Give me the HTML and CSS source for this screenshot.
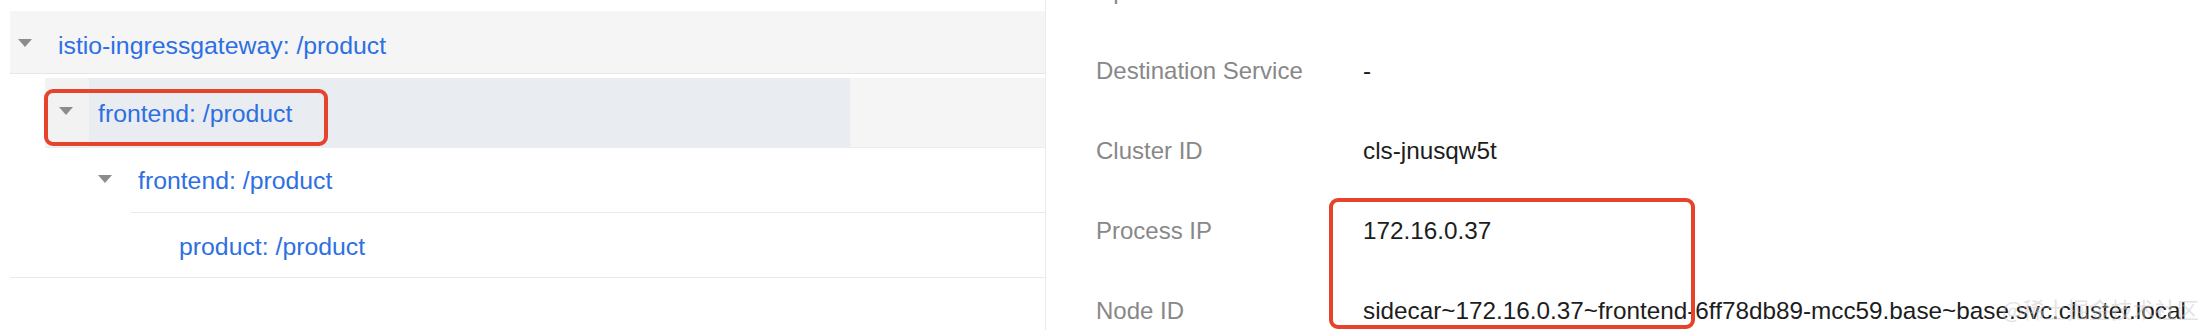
FILE: index.html
```html
<!DOCTYPE html>
<html lang="en">
<head>
    <meta charset="UTF-8">
    <meta name="viewport" content="width=device-width, initial-scale=1.0">
    <title>Trace Detail</title>
    <link rel="stylesheet" href="styles.css">
</head>
<body>
<div class="layout">
    <div class="tree">
        <div class="node node-root">
            <span class="caret"></span>
            <span class="node-label">istio-ingressgateway: /product</span>
        </div>
        <div class="node node-active">
            <span class="caret-box"><span class="caret"></span></span>
            <span class="node-label">frontend: /product</span>
        </div>
        <div class="node node-child">
            <span class="caret-box"><span class="caret"></span></span>
            <span class="node-label">frontend: /product</span>
        </div>
        <div class="node node-leaf">
            <span class="node-label">product: /product</span>
        </div>
    </div>

    <div class="details">
        <div class="prop">
            <span class="prop-name">Upstream Cluster</span>
            <span class="prop-value">-</span>
        </div>
        <div class="prop">
            <span class="prop-name">Destination Service</span>
            <span class="prop-value">-</span>
        </div>
        <div class="prop">
            <span class="prop-name">Cluster ID</span>
            <span class="prop-value">cls-jnusqw5t</span>
        </div>
        <div class="prop">
            <span class="prop-name">Process IP</span>
            <span class="prop-value">172.16.0.37</span>
        </div>
        <div class="prop">
            <span class="prop-name">Node ID</span>
            <span class="prop-value">sidecar~172.16.0.37~frontend-6ff78db89-mcc59.base~base.svc.cluster.local</span>
        </div>
    </div>
</div>

<div class="mark mark-node"></div>
<div class="mark mark-ip"></div>
<div class="watermark">@稀土掘金技术社区</div>
</body>
</html>
```

FILE: styles.css
```css
body {
    margin: 0;
    background: #fff;
    font-family: "Liberation Sans", Arial, sans-serif;
    font-size: 24px;
    overflow: hidden;
    height: 330px;
}

.layout {
    display: flex;
    height: 330px;
}

/* left: call tree */
.tree {
    width: 1035px;
    margin-left: 10px;
    padding-top: 11px;
    border-right: 1px solid #ebebeb;
    flex-shrink: 0;
    font-size: 24.8px;
}

.node {
    display: flex;
    align-items: center;
    box-sizing: border-box;
}

.node-label {
    color: #2e6fe3;
    white-space: nowrap;
}

.caret {
    display: inline-block;
    width: 0;
    height: 0;
    border-left: 7px solid transparent;
    border-right: 7px solid transparent;
    border-top: 8px solid #8c8c8c;
    margin-top: -6px;
}

.node-root {
    height: 63px;
    padding-top: 7px;
    background: #f5f5f5;
    border-bottom: 1px solid #e6e6e6;
    padding-left: 8px;
    margin-bottom: 4px;
}

.node-root .caret {
    margin-right: 26px;
}

.node-active {
    height: 70px;
    margin-left: 35px;
    background: #f5f5f5;
    border-bottom: 1px solid #ececec;
    align-items: stretch;
}

.node-active .caret-box {
    width: 44px;
    display: flex;
    align-items: center;
    padding: 3px 0 0 14px;
    box-sizing: border-box;
    background: #f2f2f2;
}

.node-active .node-label {
    width: 752px;
    padding: 3px 0 0 9px;
    display: flex;
    align-items: center;
    background: #e9edf1;
}

.node-child {
    height: 65px;
    padding-left: 88px;
    align-items: stretch;
}

.node-child .caret-box {
    width: 33px;
    display: flex;
    align-items: center;
    padding-top: 2px;
}

.node-child .node-label {
    flex: 1;
    display: flex;
    align-items: center;
    padding: 2px 0 0 7px;
    border-bottom: 1px solid #ebebeb;
}

.node-leaf {
    height: 65px;
    padding: 3px 0 0 169px;
    border-bottom: 1px solid #ebebeb;
}

/* right: span properties */
.details {
    flex: 1;
    padding-left: 50px;
    margin-top: -49px;
}

.prop {
    display: flex;
    align-items: center;
    height: 80px;
}

.prop-name {
    width: 267px;
    color: #888;
    flex-shrink: 0;
}

.prop-value {
    color: #1d1d1d;
    white-space: nowrap;
    font-size: 24.3px;
}

/* annotation boxes over the screenshot */
.mark {
    position: absolute;
    border: 4px solid #e5432b;
    border-radius: 9px;
    box-sizing: border-box;
}

.mark-node {
    left: 44px;
    top: 89px;
    width: 284px;
    height: 57px;
}

.mark-ip {
    left: 1329px;
    top: 198px;
    width: 366px;
    height: 131px;
}

.watermark {
    position: absolute;
    left: 2002px;
    top: 292px;
    font-family: "Noto Sans CJK SC", sans-serif;
    font-size: 22px;
    line-height: 32px;
    color: rgba(200, 200, 200, 0.5);
}
```
